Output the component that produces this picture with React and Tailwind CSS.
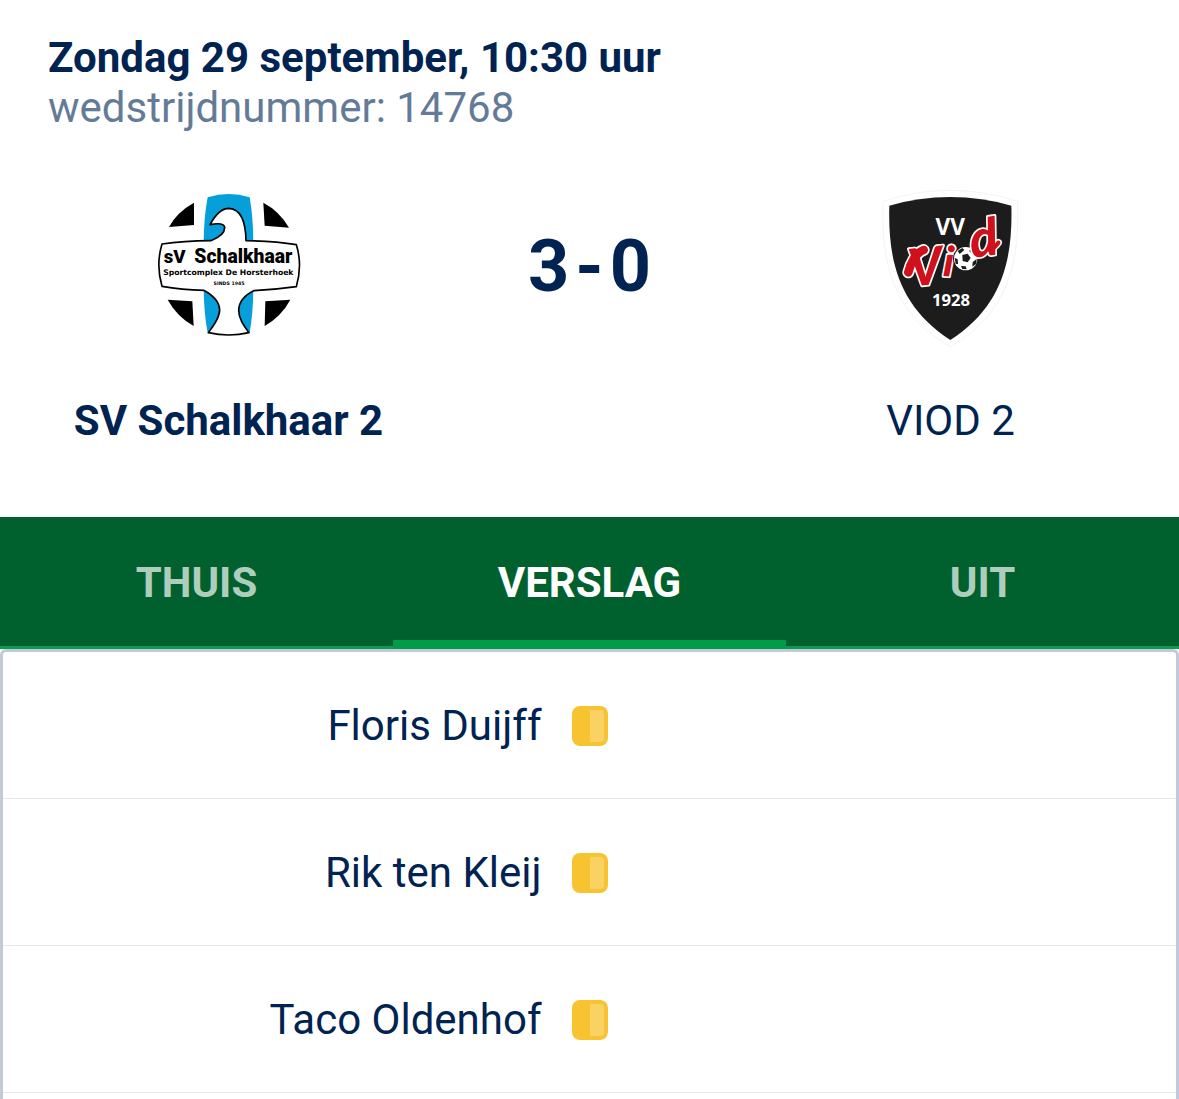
const cards = ["Floris Duijff", "Rik ten Kleij", "Taco Oldenhof"];
const tabs = ["THUIS", "VERSLAG", "UIT"];

function SchalkhaarLogo() {
  return (
    <svg viewBox="-3 0 510 510" className="h-[170px] w-[170px]" role="img" aria-label="SV Schalkhaar">
      <g fill="#000">
        <path d="M147 68V135L72 141Q96 96 147 68Z" />
        <path d="M355 68Q404 94 432 143L359 137Z" />
        <path d="M68 359L142 364L146 438Q96 410 68 359Z" />
        <path d="M361 364L436 359Q410 408 359 438Z" />
      </g>
      <path d="M188 52Q252 32 314 52Q325 115 325 190V320Q325 395 314 458H188Q176 395 176 320V190Q176 115 188 52Z" fill="#069fd9" />
      <path
        d="M195 134C213 100 230 85 252 85C285 87 302 122 303 182Q390 183 454 194Q473 255 454 320Q390 329 326 332C300 345 282 365 281 390C281 415 295 435 312 458Q252 472 190 458C207 435 223 413 224 390C223 363 204 346 176 331Q110 329 51 319Q32 255 51 192Q115 183 198 182C224 172 240 157 239 141C236 128 216 130 195 134Z"
        fill="#fff"
        stroke="#000"
        strokeWidth="5"
        strokeLinejoin="round"
      />
      <g fontWeight="900" textAnchor="middle" fill="#000">
        <text x="89" y="249" fontSize="56" fontFamily='"Roboto", sans-serif'>sV</text>
        <text x="295" y="250" fontSize="58" fontFamily='"Roboto", sans-serif'>Schalkhaar</text>
        <text x="250" y="284" fontSize="23" fontFamily='"DejaVu Sans", sans-serif'>Sportcomplex De Horsterhoek</text>
        <text x="252" y="314" fontSize="14" fontFamily='"DejaVu Sans", sans-serif'>SINDS 1945</text>
      </g>
    </svg>
  );
}

function ViodLogo() {
  return (
    <svg viewBox="2 0 480 510" className="h-[170px] w-[160px]" role="img" aria-label="VV Viod">
      <path d="M38 64Q138 31 240 31Q342 31 442 64C448 250 412 402 240 500C68 402 32 250 38 64Z" fill="#fff" stroke="#f4f4f4" strokeWidth="3" />
      <path d="M57 77Q145 51 240 51Q335 51 423 77C428 245 392 382 240 480C88 382 52 245 57 77Z" fill="#1c1c1c" />
      <g fill="#fff" textAnchor="middle" fontWeight="700">
        <text x="240" y="164" fontSize="68" fontFamily='"Open Sans", sans-serif'>VV</text>
        <text x="242" y="379" fontSize="50" fontFamily='"Open Sans", sans-serif'>1928</text>
      </g>
      <path d="M114 277C120 252 136 218 160 210" fill="none" stroke="#fff" strokeWidth="36" strokeLinecap="round" />
      <g
        fontFamily='"Lato", sans-serif'
        fontStyle="italic"
        fontWeight="900"
        fill="#d0101b"
        stroke="#fff"
        strokeWidth="10"
        strokeLinejoin="round"
        paintOrder="stroke"
      >
        <text x="118" y="316" fontSize="156" transform="rotate(-6 160 300)">V</text>
        <text x="217" y="289" fontSize="126" transform="rotate(4 235 285)">i</text>
      </g>
      <path d="M114 277C120 252 136 218 160 210" fill="none" stroke="#d0101b" strokeWidth="26" strokeLinecap="round" />
      <circle cx="286" cy="236" r="38" fill="#1c1c1c" />
      <circle cx="286" cy="236" r="35" fill="#fff" />
      <g fill="#1c1c1c">
        <path d="M276 225L292 221L301 234L292 247L277 243Z" />
        <path d="M262 213L276 204L282 210L268 222Z" />
        <path d="M301 205L315 220L309 225L297 213Z" />
        <path d="M253 233L262 238L263 252L256 252Z" />
        <path d="M272 258L286 259L289 268L276 267Z" />
        <path d="M307 246L319 237L318 251L306 260Z" />
      </g>
      <path d="M358 208Q374 204 384 188" fill="none" stroke="#fff" strokeWidth="22" strokeLinecap="round" />
      <text
        x="305"
        y="229"
        fontSize="156"
        transform="rotate(-8 340 230)"
        fontFamily='"Lato", sans-serif'
        fontStyle="italic"
        fontWeight="900"
        fill="#d0101b"
        stroke="#fff"
        strokeWidth="10"
        strokeLinejoin="round"
        paintOrder="stroke"
      >
        d
      </text>
      <path d="M358 210Q374 204 384 188" fill="none" stroke="#d0101b" strokeWidth="13" strokeLinecap="round" />
    </svg>
  );
}

function YellowCard() {
  return (
    <svg viewBox="0 0 36 40" className="h-10 w-9" role="img" aria-label="Gele kaart">
      <rect width="36" height="40" rx="8" fill="#f8c331" />
      <path d="M18 4H28Q32 4 32 8V32Q32 36 28 36H18Z" fill="#fad263" />
    </svg>
  );
}

export default function App() {
  return (
    <main className="flex min-h-screen flex-col bg-white font-['Roboto',sans-serif] text-[42px] leading-[50px] text-[#002352]">
      <header className="px-12 pt-[33px] pb-[71px]">
        <h1 className="font-bold">Zondag 29 september, 10:30 uur</h1>
        <p className="text-[#647b98]">wedstrijdnummer: 14768</p>
        <div className="mt-[47px] grid grid-cols-3 text-center">
          <div className="flex flex-col items-center gap-[46px]">
            <SchalkhaarLogo />
            <h2 className="whitespace-nowrap font-bold">SV Schalkhaar 2</h2>
          </div>
          <div className="flex h-[174px] items-center justify-center gap-1.5 text-[72px] font-bold">
            <span>3</span>
            <span>-</span>
            <span>0</span>
          </div>
          <div className="flex flex-col items-center gap-[46px]">
            <ViodLogo />
            <h2 className="whitespace-nowrap">VIOD 2</h2>
          </div>
        </div>
      </header>

      <nav className="grid h-[132px] grid-cols-3 bg-[#00612e]" role="tablist">
        {tabs.map((tab) => (
          <button
            key={tab}
            type="button"
            role="tab"
            aria-selected={tab === "VERSLAG"}
            className="border-b-3 border-[#0b9a4e] pt-[3px] font-bold text-white/70 aria-selected:border-b-9 aria-selected:border-[#009b48] aria-selected:pt-[9px] aria-selected:text-white"
          >
            {tab}
          </button>
        ))}
      </nav>

      <ul className="flex-1 rounded-t-md border-x-3 border-t-3 border-[#c3c9d8]">
        {cards.map((name) => (
          <li key={name} className="grid h-[147px] grid-cols-[1fr_36px_1fr] items-center gap-[30px] border-b border-[#e6e8ec] pt-0.5">
            <span className="text-right">{name}</span>
            <YellowCard />
          </li>
        ))}
      </ul>
    </main>
  );
}
